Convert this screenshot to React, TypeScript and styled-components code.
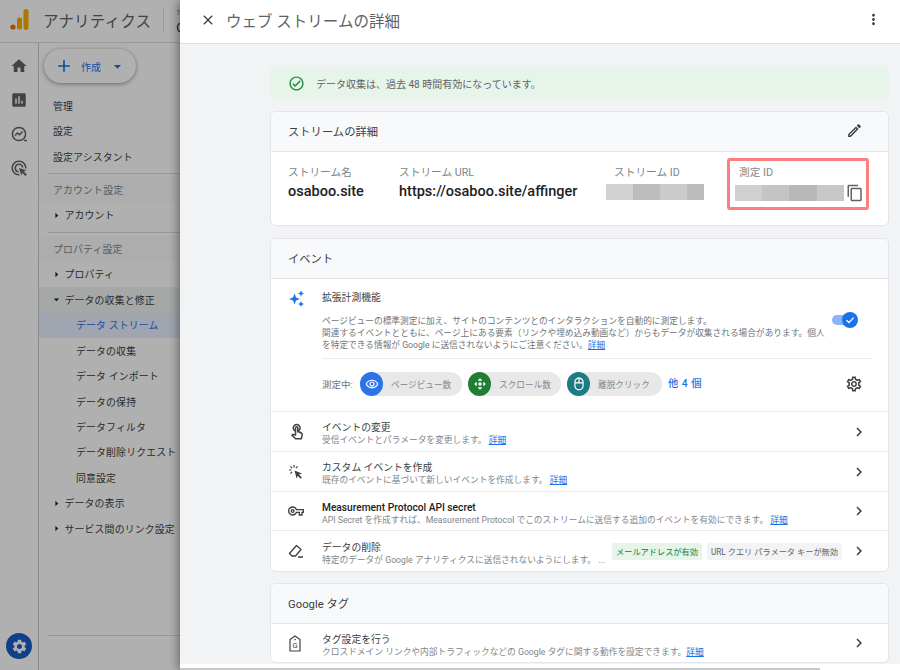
import React from 'react'
import styled, { createGlobalStyle } from 'styled-components'
import {
  MdAdd, MdArrowDropDown, MdArrowRight, MdChevronRight, MdClose, MdControlCamera, MdHome,
  MdInsertChart, MdMoreVert, MdOutlineAdsClick, MdOutlineCheckCircle, MdOutlineContentCopy, MdOutlineEdit, MdOutlineMouse,
  MdOutlineRemoveRedEye, MdOutlineSettings, MdOutlineTouchApp, MdOutlineVpnKey, MdSettings,
} from 'react-icons/md'

const GlobalStyle = createGlobalStyle`
  html, body { margin: 0; padding: 0; background: #fff; }
  body { font-family: Roboto, "Noto Sans CJK JP", sans-serif; color: #3c4043; }
  * { box-sizing: border-box; }
`

const Page = styled.div`
  position: relative;
  width: 900px;
  height: 670px;
  overflow: hidden;
  background: #fff;
`

/* ---------- page behind the drawer ---------- */

const TopBar = styled.header`
  height: 43px;
  display: flex;
  align-items: center;
  padding: 0 0 3px 10px;
  border-bottom: 1px solid #dadce0;
`

const AppName = styled.div`
  margin-left: 14px;
  font-size: 15.5px;
  color: #5f6368;
  letter-spacing: 0.2px;
  white-space: nowrap;
`

const TopDivider = styled.div`
  width: 1px;
  height: 24px;
  margin-left: 12px;
  background: #dadce0;
`

const Account = styled.div`
  margin: 3px 0 0 12px;
  display: flex;
  flex-direction: column;
  gap: 4px;
  white-space: nowrap;
`

const AccountLabel = styled.div`
  font-size: 8px;
  line-height: 9px;
  color: #80868b;
`

const AccountName = styled.div`
  font-size: 12px;
  line-height: 14px;
  color: #202124;
`

const Body = styled.div`
  display: flex;
  height: 627px;
`

const Rail = styled.nav`
  width: 39px;
  flex: none;
  display: flex;
  flex-direction: column;
  align-items: center;
  padding-top: 6px;
  border-right: 1px solid #c8cacd;
  color: #5f6368;
`

const RailItem = styled.div`
  height: 34px;
  display: flex;
  align-items: center;
  justify-content: center;
`

const SettingsButton = styled.div`
  width: 26px;
  height: 26px;
  margin-top: auto;
  margin-bottom: 11px;
  border-radius: 50%;
  background: #1a5ec8;
  color: #fff;
  display: flex;
  align-items: center;
  justify-content: center;
`

const Nav = styled.div`
  width: 230px;
  flex: none;
  display: flex;
  flex-direction: column;
`

const CreateButton = styled.div`
  width: 92px;
  height: 34px;
  margin: 6px 0 10px 5px;
  border-radius: 17px;
  background: #fff;
  box-shadow: 0 1px 4px rgba(0, 0, 0, 0.4);
  color: #1a73e8;
  font-size: 10px;
  display: flex;
  align-items: center;
  padding-left: 10px;
  gap: 7px;
  span { margin-right: 1px; }
`

const NavRow = styled.div<{ $indent: number; $tone?: 'active' | 'open' | 'head' }>`
  height: 25.45px;
  flex: none;
  display: flex;
  align-items: center;
  padding-left: ${p => p.$indent}px;
  font-size: 9.9px;
  letter-spacing: 0.15px;
  white-space: nowrap;
  color: ${p => (p.$tone === 'active' ? '#1a73e8' : p.$tone === 'head' ? '#80868b' : '#3c4043')};
  background: ${p => (p.$tone === 'active' ? '#e8f0fe' : p.$tone === 'open' ? '#f1f3f4' : p.$tone === 'head' ? '#fafbf9' : 'transparent')};
`

const Caret = styled.span`
  width: 18px;
  margin-left: -6px;
  margin-right: -0.5px;
  display: flex;
  justify-content: center;
  color: #202124;
`

const NavLine = styled.div<{ $last?: boolean }>`
  height: 1px;
  flex: none;
  margin: ${p => (p.$last ? 'auto 0 34px 9px' : '3.5px 0 3.5px 9px')};
  background: #dadce0;
`

const Scrim = styled.div`
  position: absolute;
  inset: 0;
  background: rgba(0, 0, 0, 0.31);
`

/* ---------- drawer ---------- */

const Drawer = styled.aside`
  position: absolute;
  top: 0;
  bottom: 0;
  left: 180px;
  right: 0;
  display: flex;
  flex-direction: column;
  background: #f1f3f5;
  box-shadow: -2px 0 9px rgba(0, 0, 0, 0.4);
`

const DrawerHead = styled.div`
  height: 44px;
  flex: none;
  display: flex;
  align-items: center;
  padding: 0 18px 4px 20px;
  background: #fff;
  border-bottom: 1px solid #dadce0;
  color: #3c4043;
`

const DrawerTitle = styled.div`
  margin-left: 10px;
  flex: 1;
  font-size: 15.5px;
  color: #5f6368;
`

const DrawerBody = styled.div`
  flex: 1;
  min-height: 0;
  overflow: hidden;
  padding: 23px 11px 0 90px;
`

const Notice = styled.div`
  height: 32px;
  display: flex;
  align-items: center;
  gap: 11px;
  padding-left: 18px;
  border-radius: 4px;
  background: #e6f4ea;
  color: #1e8e3e;
  font-size: 10px;
  span { color: #5f6368; }
`

const Card = styled.section<{ $gap?: number }>`
  margin-top: ${p => p.$gap ?? 12}px;
  border: 1px solid #e3e5e8;
  border-radius: 6px;
  background: #fff;
  overflow: hidden;
`

const CardHead = styled.div`
  height: 40px;
  display: flex;
  align-items: center;
  justify-content: space-between;
  padding: 0 25px 2px 17px;
  background: #f8f9fa;
  border-bottom: 1px solid #e3e5e8;
  font-size: 11.3px;
  color: #3c4043;
`

const Fields = styled.div`
  height: 73px;
  display: grid;
  grid-template-columns: 111px 207px 121px 142px;
  padding: 6px 0 0 17px;
`

const Field = styled.div<{ $marked?: boolean }>`
  height: 52px;
  padding-top: 7px;
  ${p => p.$marked && 'border: 3px solid #fa8080; border-radius: 3px; padding-top: 4px; padding-left: 5px;'}
`

const FieldLabel = styled.div<{ $shift?: number }>`
  height: 15px;
  margin-left: ${p => p.$shift ?? 0}px;
  font-size: 10.7px;
  line-height: 15px;
  color: #80868b;
`

const FieldValue = styled.div`
  margin-top: 3px;
  font-size: 14.5px;
  line-height: 18px;
  font-weight: 500;
  color: #202124;
  white-space: nowrap;
`

const IdRow = styled.div<{ $top: number }>`
  display: flex;
  align-items: flex-start;
  margin-top: ${p => p.$top}px;
  color: #5f6368;
`

const Mosaic = styled.div<{ $w: number }>`
  width: ${p => p.$w}px;
  height: 16px;
  display: flex;
  margin-right: 2px;
`

const MosaicCell = styled.div<{ $c: string; $w: number }>`
  width: ${p => p.$w}px;
  background: ${p => p.$c};
`

const CopyIcon = styled(MdOutlineContentCopy)`
  margin-top: -1px;
`

const Feature = styled.div`
  height: 133px;
  display: flex;
  padding: 10px 17px 0 17px;
  border-bottom: 1px solid #e8eaed;
`

const IconCell = styled.div<{ $top?: boolean }>`
  width: 34px;
  flex: none;
  display: flex;
  align-items: ${p => (p.$top ? 'flex-start' : 'center')};
  padding-top: ${p => (p.$top ? '1px' : '0')};
  color: #3c4043;
`

const FeatureMain = styled.div`
  flex: 1;
  min-width: 0;
`

const FeatureTitle = styled.div`
  height: 18px;
  font-size: 9.8px;
  line-height: 18px;
  color: #3c4043;
`

const FeatureTop = styled.div`
  display: flex;
  justify-content: space-between;
  margin-top: 8px;
  padding-bottom: 7px;
  border-bottom: 1px solid #e8eaed;
`

const Description = styled.p`
  width: 506px;
  margin: 0;
  font-size: 8.7px;
  line-height: 12px;
  color: #70757a;
`

const Detail = styled.a`
  color: #1a73e8;
  text-decoration: underline;
`

const Toggle = styled.div`
  position: relative;
  width: 26px;
  height: 16px;
  margin: -3px 13px 0 0;
`

const ToggleTrack = styled.div`
  width: 20px;
  height: 10px;
  margin-top: 3px;
  border-radius: 5px;
  background: #8ab4f8;
`

const ToggleThumb = styled.div`
  position: absolute;
  top: 0;
  right: 0;
  width: 16px;
  height: 16px;
  border-radius: 50%;
  background: #1a73e8;
  color: #fff;
  display: flex;
  align-items: center;
  justify-content: center;
`

const Measuring = styled.div`
  display: flex;
  align-items: center;
  height: 34px;
  margin-top: 8px;
  font-size: 9.5px;
  color: #70757a;
`

const MeasuringLabel = styled.span`
  width: 38px;
  flex: none;
`

const Pill = styled.div<{ $w: number }>`
  width: ${p => p.$w}px;
  height: 24px;
  margin-right: 6px;
  display: flex;
  align-items: center;
  border-radius: 12px;
  background: #e8e8e8;
  font-size: 8.65px;
  color: #80868b;
`

const PillIcon = styled.div<{ $c: string }>`
  width: 23px;
  height: 24px;
  margin-right: 8px;
  border-radius: 50%;
  background: ${p => p.$c};
  color: #fff;
  display: flex;
  align-items: center;
  justify-content: center;
`

const MoreLink = styled.div`
  margin: -3px auto 0 0;
  font-size: 10.3px;
  font-weight: 500;
  letter-spacing: 0.5px;
  color: #1a73e8;
`

const GearWrap = styled.div`
  display: flex;
  margin-right: 8px;
  color: #3c4043;
`

const Row = styled.div<{ $h: number }>`
  height: ${p => p.$h}px;
  display: flex;
  align-items: center;
  padding: 0 20px 0 17px;
  border-bottom: 1px solid #e8eaed;
  &:last-child { border-bottom: 0; }
`

const RowText = styled.div`
  flex: 1;
  min-width: 0;
  padding-top: 4px;
`

const RowTitle = styled.div<{ $strong?: boolean }>`
  font-size: ${p => (p.$strong ? '10.2px' : '9.8px')};
  line-height: 13px;
  font-weight: ${p => (p.$strong ? 500 : 400)};
  color: ${p => (p.$strong ? '#202124' : '#3c4043')};
`

const RowSub = styled.div`
  font-size: 8.72px;
  line-height: 12px;
  color: #80868b;
  white-space: nowrap;
`

const Chip = styled.div<{ $on?: boolean }>`
  height: 17px;
  margin-left: 5px;
  padding: 0 4px;
  display: flex;
  align-items: center;
  border-radius: 2px;
  font-size: 8.2px;
  white-space: nowrap;
  background: ${p => (p.$on ? '#e6f4ea' : '#f1f3f4')};
  color: ${p => (p.$on ? '#188038' : '#5f6368')};
`

const Chevron = styled.div<{ $gap?: number }>`
  margin-left: ${p => p.$gap ?? 0}px;
  display: flex;
  color: #3c4043;
`

const BottomBar = styled.div`
  position: absolute;
  left: 0;
  right: 0;
  bottom: 0;
  height: 6px;
  background: #fff;
`

const BottomThumb = styled.div`
  width: 640px;
  height: 2px;
  margin-top: 4px;
  background: #c9c9c9;
`

/* ---------- drawings ---------- */

const AnalyticsLogo = () => (
  <svg width="19" height="21" viewBox="0 0 19 21">
    <circle cx="3" cy="18" r="2.6" fill="#e37400" />
    <rect x="7" y="8.5" width="5" height="12" rx="2" fill="#f9ab00" />
    <rect x="13.5" y="0" width="5" height="21" rx="2.4" fill="#f9ab00" />
  </svg>
)

const InsightsIcon = () => (
  <svg width="17" height="17" viewBox="0 0 17 17" fill="none" stroke="currentColor" strokeWidth="1.5">
    <circle cx="8" cy="8" r="6.6" />
    <path d="M4 9.5l2.5-2.5 2 1.8 3.2-3.4M13 14.5h3" />
  </svg>
)

const Sparkle = () => (
  <svg width="17" height="17" viewBox="0 0 17 17" fill="#1a73e8">
    <path d="M6.5 3.5 8 7.5l4 1.5-4 1.5-1.5 4-1.5-4-4-1.5 4-1.5z" />
    <path d="M13 0.5l.9 2.1 2.1.9-2.1.9-.9 2.1-.9-2.1-2.1-.9 2.1-.9zM13 11l.9 2.1 2.1.9-2.1.9-.9 2.1-.9-2.1-2.1-.9 2.1-.9z" />
  </svg>
)

const CursorBurst = () => (
  <svg width="16" height="16" viewBox="0 0 16 16" fill="none" stroke="currentColor" strokeWidth="1.2">
    <path d="M6.5 6.5l7.5 3-3 1 2.8 3-1.3 1.2-2.8-3-1 3z" fill="currentColor" stroke="none" />
    <path d="M6 1v2.4M1 6h2.4M2.4 2.4l1.7 1.7M9.6 2.4 7.9 4.1M2.4 9.6l1.7-1.7" />
  </svg>
)

const Eraser = () => (
  <svg width="16" height="16" viewBox="0 0 16 16" fill="none" stroke="currentColor" strokeWidth="1.3" strokeLinejoin="round">
    <path d="M1.5 10.5 8.5 2.5l4.5 4-5.5 6.5H4z" />
    <path d="M10 14h5" />
  </svg>
)

const TagIcon = () => (
  <svg width="14" height="17" viewBox="0 0 14 17" fill="none" stroke="currentColor" strokeWidth="1.2">
    <path d="M7 1 2 4.5V16h10V4.5z" />
    <circle cx="7" cy="4.6" r="0.8" fill="currentColor" stroke="none" />
    <text x="7" y="13.4" fontSize="7.5" fontFamily="Roboto" fill="currentColor" stroke="none" textAnchor="middle">G</text>
  </svg>
)

/* ---------- data ---------- */

const navItems: { label: string; indent: number; tone?: 'active' | 'open' | 'head'; caret?: 'right' | 'down'; line?: boolean }[] = [
  { label: '管理', indent: 14 },
  { label: '設定', indent: 14 },
  { label: '設定アシスタント', indent: 14, line: true },
  { label: 'アカウント設定', indent: 14, tone: 'head' },
  { label: 'アカウント', indent: 14, caret: 'right', line: true },
  { label: 'プロパティ設定', indent: 14, tone: 'head' },
  { label: 'プロパティ', indent: 14, caret: 'right' },
  { label: 'データの収集と修正', indent: 14, caret: 'down', tone: 'open' },
  { label: 'データ ストリーム', indent: 37, tone: 'active' },
  { label: 'データの収集', indent: 37 },
  { label: 'データ インポート', indent: 37 },
  { label: 'データの保持', indent: 37 },
  { label: 'データフィルタ', indent: 37 },
  { label: 'データ削除リクエスト', indent: 37 },
  { label: '同意設定', indent: 37 },
  { label: 'データの表示', indent: 14, caret: 'right' },
  { label: 'サービス間のリンク設定', indent: 14, caret: 'right' },
]

const streamIdCells = [
  { c: '#d3d3d3', w: 27 }, { c: '#bdbdbd', w: 27 }, { c: '#cbcbcb', w: 27 }, { c: '#bcbcbc', w: 17 },
]

const measureIdCells = [
  { c: '#d0d0d0', w: 27 }, { c: '#c4c4c4', w: 27 }, { c: '#b8b8b8', w: 28 }, { c: '#c8c8c8', w: 27 },
]

export default function App() {
  return (
    <Page>
      <GlobalStyle />

      <TopBar>
        <AnalyticsLogo />
        <AppName>アナリティクス</AppName>
        <TopDivider />
        <Account>
          <AccountLabel>Top</AccountLabel>
          <AccountName>Osaboo</AccountName>
        </Account>
      </TopBar>

      <Body>
        <Rail>
          <RailItem><MdHome size={18} /></RailItem>
          <RailItem><MdInsertChart size={18} /></RailItem>
          <RailItem><InsightsIcon /></RailItem>
          <RailItem><MdOutlineAdsClick size={18} /></RailItem>
          <SettingsButton><MdSettings size={17} /></SettingsButton>
        </Rail>
        <Nav>
          <CreateButton>
            <MdAdd size={20} />
            <span>作成</span>
            <MdArrowDropDown size={17} />
          </CreateButton>
          {navItems.map(item => (
            <React.Fragment key={item.label}>
              <NavRow $indent={item.indent} $tone={item.tone}>
                {item.caret && (
                  <Caret>
                    {item.caret === 'right' ? <MdArrowRight size={13} /> : <MdArrowDropDown size={13} />}
                  </Caret>
                )}
                {item.label}
              </NavRow>
              {item.line && <NavLine />}
            </React.Fragment>
          ))}
          <NavLine $last />
        </Nav>
      </Body>

      <Scrim />

      <Drawer>
        <DrawerHead>
          <MdClose size={16} />
          <DrawerTitle>ウェブ ストリームの詳細</DrawerTitle>
          <MdMoreVert size={17} />
        </DrawerHead>

        <DrawerBody>
          <Notice>
            <MdOutlineCheckCircle size={17} />
            <span>データ収集は、過去 48 時間有効になっています。</span>
          </Notice>

          <Card>
            <CardHead>
              ストリームの詳細
              <MdOutlineEdit size={17} />
            </CardHead>
            <Fields>
              <Field>
                <FieldLabel>ストリーム名</FieldLabel>
                <FieldValue>osaboo.site</FieldValue>
              </Field>
              <Field>
                <FieldLabel>ストリーム URL</FieldLabel>
                <FieldValue>https://osaboo.site/affinger</FieldValue>
              </Field>
              <Field>
                <FieldLabel $shift={8}>ストリーム ID</FieldLabel>
                <IdRow $top={4}>
                  <Mosaic $w={98}>
                    {streamIdCells.map((cell, i) => <MosaicCell key={i} $c={cell.c} $w={cell.w} />)}
                  </Mosaic>
                </IdRow>
              </Field>
              <Field $marked>
                <FieldLabel $shift={4}>測定 ID</FieldLabel>
                <IdRow $top={5}>
                  <Mosaic $w={109}>
                    {measureIdCells.map((cell, i) => <MosaicCell key={i} $c={cell.c} $w={cell.w} />)}
                  </Mosaic>
                  <CopyIcon size={18} />
                </IdRow>
              </Field>
            </Fields>
          </Card>

          <Card>
            <CardHead>イベント</CardHead>
            <Feature>
              <IconCell $top><Sparkle /></IconCell>
              <FeatureMain>
                <FeatureTitle>拡張計測機能</FeatureTitle>
                <FeatureTop>
                  <Description>
                    ページビューの標準測定に加え、サイトのコンテンツとのインタラクションを自動的に測定します。
                    <br />
                    関連するイベントとともに、ページ上にある要素（リンクや埋め込み動画など）からもデータが収集される場合があります。個人を特定できる情報が Google に送信されないようにご注意ください。<Detail>詳細</Detail>
                  </Description>
                  <Toggle>
                    <ToggleTrack />
                    <ToggleThumb>
                      <svg width="10" height="10" viewBox="0 0 10 10" fill="none" stroke="currentColor" strokeWidth="1.4">
                        <path d="M1.5 5.2 4 7.6l4.6-5" />
                      </svg>
                    </ToggleThumb>
                  </Toggle>
                </FeatureTop>
                <Measuring>
                  <MeasuringLabel>測定中:</MeasuringLabel>
                  <Pill $w={102}>
                    <PillIcon $c="#2a74e8"><MdOutlineRemoveRedEye size={14} /></PillIcon>
                    ページビュー数
                  </Pill>
                  <Pill $w={93}>
                    <PillIcon $c="#1e7e34"><MdControlCamera size={14} /></PillIcon>
                    スクロール数
                  </Pill>
                  <Pill $w={95}>
                    <PillIcon $c="#1b7d83"><MdOutlineMouse size={14} /></PillIcon>
                    離脱クリック
                  </Pill>
                  <MoreLink>他 4 個</MoreLink>
                  <GearWrap><MdOutlineSettings size={18} /></GearWrap>
                </Measuring>
              </FeatureMain>
            </Feature>
            <Row $h={40}>
              <IconCell><MdOutlineTouchApp size={18} /></IconCell>
              <RowText>
                <RowTitle>イベントの変更</RowTitle>
                <RowSub>受信イベントとパラメータを変更します。 <Detail>詳細</Detail></RowSub>
              </RowText>
              <Chevron><MdChevronRight size={18} /></Chevron>
            </Row>
            <Row $h={40}>
              <IconCell><CursorBurst /></IconCell>
              <RowText>
                <RowTitle>カスタム イベントを作成</RowTitle>
                <RowSub>既存のイベントに基づいて新しいイベントを作成します。 <Detail>詳細</Detail></RowSub>
              </RowText>
              <Chevron><MdChevronRight size={18} /></Chevron>
            </Row>
            <Row $h={39}>
              <IconCell><MdOutlineVpnKey size={16} /></IconCell>
              <RowText>
                <RowTitle $strong>Measurement Protocol API secret</RowTitle>
                <RowSub>API Secret を作成すれば、Measurement Protocol でこのストリームに送信する追加のイベントを有効にできます。 <Detail>詳細</Detail></RowSub>
              </RowText>
              <Chevron><MdChevronRight size={18} /></Chevron>
            </Row>
            <Row $h={40}>
              <IconCell><Eraser /></IconCell>
              <RowText>
                <RowTitle>データの削除</RowTitle>
                <RowSub>特定のデータが Google アナリティクスに送信されないようにします。 ...</RowSub>
              </RowText>
              <Chip $on>メールアドレスが有効</Chip>
              <Chip>URL クエリ パラメータ キーが無効</Chip>
              <Chevron $gap={8}><MdChevronRight size={18} /></Chevron>
            </Row>
          </Card>

          <Card $gap={11}>
            <CardHead>Google タグ</CardHead>
            <Row $h={38}>
              <IconCell><TagIcon /></IconCell>
              <RowText>
                <RowTitle>タグ設定を行う</RowTitle>
                <RowSub>クロスドメイン リンクや内部トラフィックなどの Google タグに関する動作を設定できます。<Detail>詳細</Detail></RowSub>
              </RowText>
              <Chevron><MdChevronRight size={18} /></Chevron>
            </Row>
          </Card>
        </DrawerBody>
        <BottomBar><BottomThumb /></BottomBar>
      </Drawer>
    </Page>
  )
}
